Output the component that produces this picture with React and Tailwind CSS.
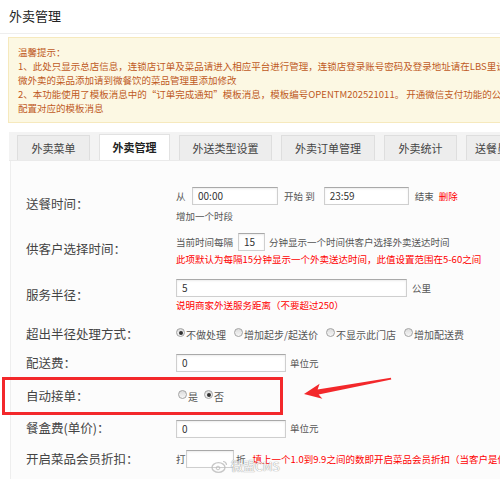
import React from 'react';

const font = "font-['Noto_Sans_CJK_SC','Microsoft_YaHei',sans-serif]";

function Input({ w, value }) {
    return (
        <div className={`${w} h-[18px] bg-white border border-[#cfcfcf] border-t-[#a9a9a9] shadow-[inset_0_1px_2px_rgba(0,0,0,0.08)] pl-[5px] text-[10px] leading-[16px] text-[#333]`}>
            {value}
        </div>
    );
}

function Radio({ checked, label }) {
    return (
        <span className="flex items-center">
            <span className="w-[9px] h-[9px] rounded-full border border-[#a3a3a3] bg-gradient-to-b from-[#dcdcdc] to-[#f7f7f7] flex items-center justify-center -mt-[3px]">
                {checked && <span className="w-[4px] h-[4px] rounded-full bg-[#333]" />}
            </span>
            <span className="ml-[1px]">{label}</span>
        </span>
    );
}

function Row({ label, h, children }) {
    return (
        <div className={`flex items-center ${h} pl-[15px]`}>
            <div className="w-[150px] shrink-0 text-[12.5px] text-[#444]">{label}</div>
            <div className="flex flex-col text-[9.5px] text-[#555] whitespace-nowrap">{children}</div>
        </div>
    );
}

export default function App() {
    const tabs = ['外卖菜单', '外卖管理', '外送类型设置', '外卖订单管理', '外卖统计', '送餐员管理'];
    const tabW = ['w-[73px]', 'w-[71px]', 'w-[93px]', 'w-[94px]', 'w-[73px]', 'w-[73px]'];

    return (
        <div className={`relative w-[500px] h-[479px] overflow-hidden bg-white ${font}`}>
            {/* 标题 */}
            <div className="h-[34px] px-[9px] pt-[7px] text-[13px] leading-[18px] text-[#222] border-b border-[#eeeeee]">
                外卖管理
            </div>

            {/* 温馨提示 */}
            <div className="mt-[3px] ml-[8px] w-[560px] h-[86px] bg-[#fcf8e3] border border-[#f6e9bd] pl-[9px] pt-[7px] text-[9.5px] leading-[14px] text-[#bf5a1e] whitespace-nowrap">
                <div>温馨提示：</div>
                <div>1、此处只显示总店信息，连锁店订单及菜品请进入相应平台进行管理，连锁店登录账号密码及登录地址请在LBS里设置</div>
                <div>微外卖的菜品添加请到微餐饮的菜品管理里添加修改</div>
                <div>2、本功能使用了模板消息中的“订单完成通知”模板消息，模板编号OPENTM202521011。 开通微信支付功能的公众号</div>
                <div>配置对应的模板消息</div>
            </div>

            {/* 选项卡 */}
            <div className="mt-[9px] ml-[9px] w-[560px] h-[29px] bg-[#f3f3f3] flex items-end gap-[9px] pl-[8px] border-b border-[#eaeaea]">
                {tabs.map((t, i) => (
                    <div key={t}
                        className={`${tabW[i]} h-[25px] shrink-0 flex items-center justify-center text-[11px] border border-b-0 ${i === 1 ? 'bg-white border-[#e2e2e2] font-bold text-[#222] h-[26px]' : 'bg-[#ededed] border-[#dedede] text-[#444]'}`}>
                        {t}
                    </div>
                ))}
            </div>

            {/* 内容 */}
            <div className="ml-[10px] w-[560px] h-[330px] bg-[#fcfcfc] border-l border-[#eeeeee] pt-[20px]">
                <Row label="送餐时间：" h="h-[46px]">
                    <div className="flex items-center h-[22px]">
                        <span className="w-[16px]">从</span>
                        <Input w="w-[86px]" value="00:00" />
                        <span className="ml-[6px] mr-[9px]">开始 到</span>
                        <Input w="w-[85px]" value="23:59" />
                        <span className="ml-[6px]">结束</span>
                        <span className="ml-[5px] text-[#f00]">删除</span>
                    </div>
                    <div className="h-[14px] leading-[14px] mt-[2px]">增加一个时段</div>
                </Row>

                <Row label="供客户选择时间：" h="h-[44px]">
                    <div className="flex items-center h-[20px]">
                        <span className="w-[62px]">当前时间每隔</span>
                        <Input w="w-[27px]" value="15" />
                        <span className="ml-[4px]">分钟显示一个时间供客户选择外卖送达时间</span>
                    </div>
                    <div className="h-[14px] leading-[14px] text-[#f00]">此项默认为每隔15分钟显示一个外卖送达时间，此值设置范围在5-60之间</div>
                </Row>

                <Row label="服务半径：" h="h-[48px]">
                    <div className="flex items-center h-[19px]">
                        <Input w="w-[231px]" value="5" />
                        <span className="ml-[5px]">公里</span>
                    </div>
                    <div className="h-[14px] leading-[14px] text-[#f00]">说明商家外送服务距离（不要超过250）</div>
                </Row>

                <Row label="超出半径处理方式：" h="h-[30px]">
                    <div className="flex items-center gap-[8px] text-[10px]">
                        <Radio checked label="不做处理" />
                        <Radio label="增加起步/起送价" />
                        <Radio label="不显示此门店" />
                        <Radio label="增加配送费" />
                    </div>
                </Row>

                <Row label="配送费：" h="h-[28px]">
                    <div className="flex items-center">
                        <Input w="w-[110px]" value="0" />
                        <span className="ml-[4px]">单位元</span>
                    </div>
                </Row>

                {/* 标注框 */}
                <div className="w-[281px] h-[38px] -ml-[9px] border-[3px] border-[#f3282b] flex items-center pl-[21px]">
                    <div className="w-[150px] shrink-0 text-[12.5px] text-[#444]">自动接单：</div>
                    <div className="flex items-center gap-[6px] text-[10px] text-[#555] ml-[2px]">
                        <Radio label="是" />
                        <Radio checked label="否" />
                    </div>
                </div>

                <Row label="餐盒费(单价)：" h="h-[27px]">
                    <div className="flex items-center">
                        <Input w="w-[110px]" value="0" />
                        <span className="ml-[4px]">单位元</span>
                    </div>
                </Row>

                <Row label="开启菜品会员折扣：" h="h-[34px]">
                    <div className="flex items-center">
                        <span className="w-[10px]">打</span>
                        <Input w="w-[48px]" value="" />
                        <span className="ml-[2px]">折</span>
                        <span className="ml-[7px] text-[#f00]">填上一个1.0到9.9之间的数即开启菜品会员折扣（当客户是你的会员时）</span>
                    </div>
                </Row>

                <div className="pl-[165px] pt-[3px]">
                    <Input w="w-[231px]" value="" />
                </div>
            </div>

            {/* 箭头 */}
            <svg className="absolute left-0 top-0 pointer-events-none" width="500" height="479" viewBox="0 0 500 479">
                <polygon
                    points="304,394 319.6,383.8 317.6,389.4 390.9,377.8 391.3,379.4 318.6,394.6 322.4,398.8"
                    fill="#f3282b"
                />
            </svg>

            {/* 水印 */}
            <div className="absolute left-[211px] top-[459px] flex items-center gap-[3px] pointer-events-none opacity-80">
                <svg width="17" height="14" viewBox="0 0 17 14">
                    <ellipse cx="7.5" cy="8.5" rx="6.5" ry="4.8" fill="none" stroke="#bbb" strokeWidth="1.3" />
                    <circle cx="7" cy="9" r="1.8" fill="none" stroke="#bbb" strokeWidth="1" />
                    <path d="M12 2.5 A3.5 3.5 0 0 1 15.5 6" fill="none" stroke="#bbb" strokeWidth="1.2" />
                </svg>
                <span className="text-[12px] leading-[14px] text-white [text-shadow:0_0_1px_#888,0_0_1px_#888]">微盟CMS</span>
            </div>
        </div>
    );
}
